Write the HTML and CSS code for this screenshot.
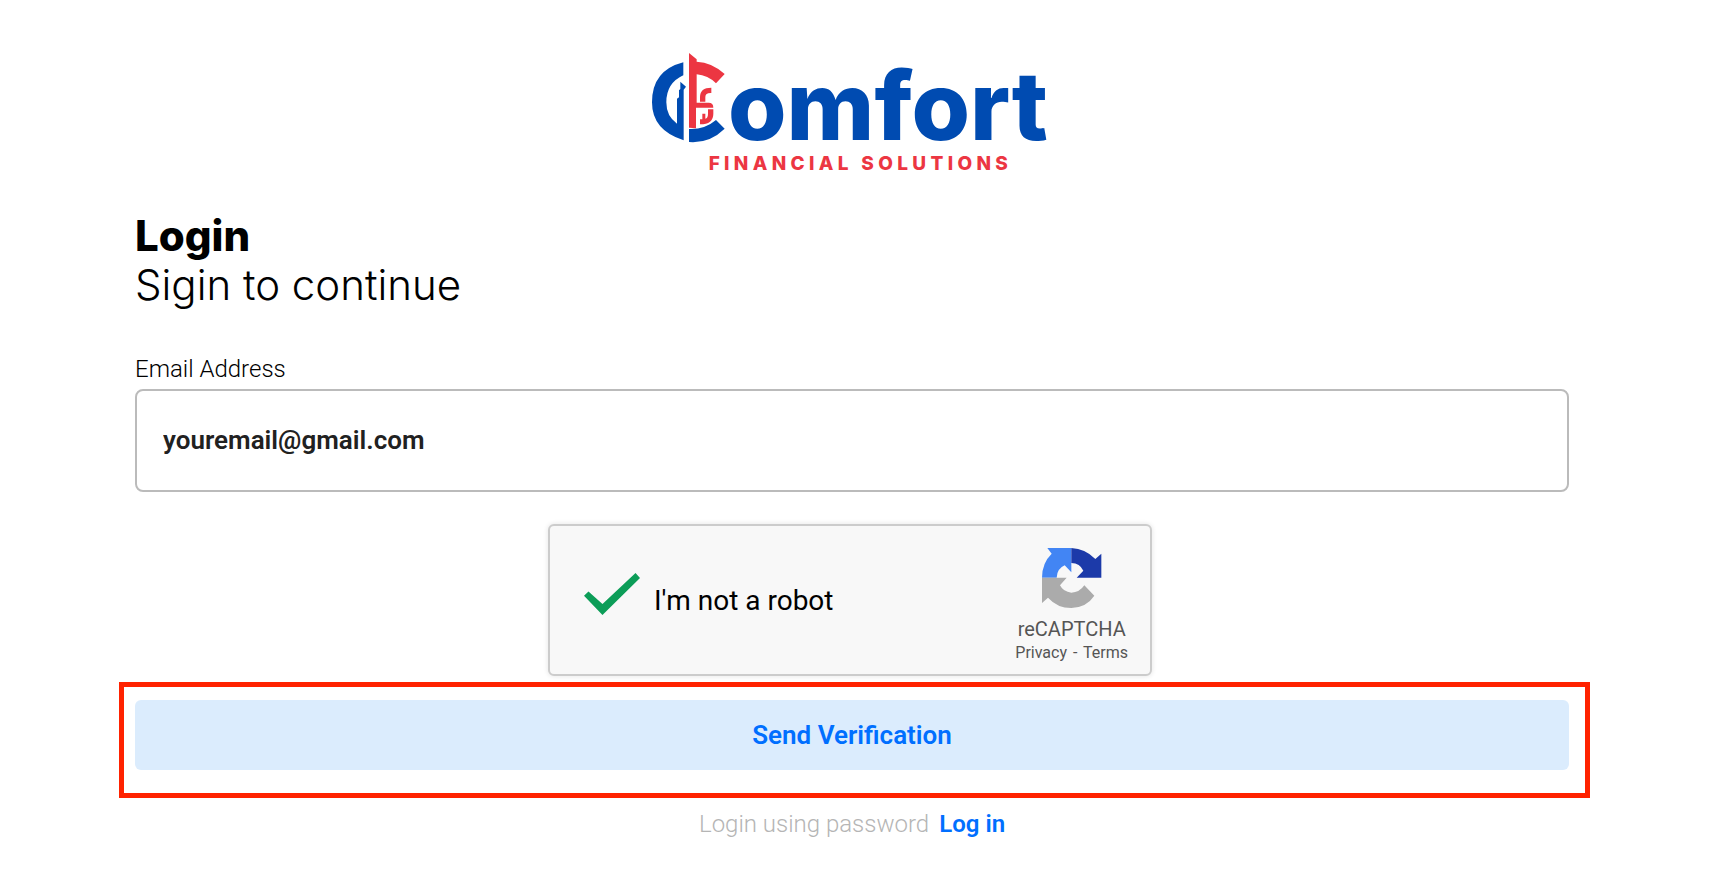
FILE: index.html
```html
<!DOCTYPE html>
<html lang="en">
<head>
<meta charset="utf-8">
<meta name="viewport" content="width=device-width, initial-scale=1">
<title>Login - Comfort Financial Solutions</title>
<link rel="stylesheet" href="styles.css">
</head>
<body>
<main class="page">
  <svg class="logo" viewBox="36 38 1200 360" role="img" aria-label="Comfort Financial Solutions">
    <g class="logo-blue">
      <path d="M130 66V105Q79 128 79 186Q79 228 111 250V175L117 171V150L121 146V124L138 139L131 148V300Q36 270 36 186Q36 90 130 66Z"/>
      <path d="M147 266Q194 268 228 239L254 265Q208 310 147 305Z"/>
      <text class="logo-word" x="264" y="300">omfort</text>
    </g>
    <g class="logo-red">
      <path d="M147 38L170 57V64Q216 66 254 101L228 129Q204 105 170 102V187H206Q220 187 220 202H168V264L147 262Z"/>
      <path d="M180 184V170Q180 142 214 142V158Q196 157 196 170V184Z"/>
      <path d="M180 220H196V235Q204 233 204 220V207H220V220Q220 252 180 252V237H187V220Z"/>
      <text class="logo-tag" x="206" y="388">FINANCIAL SOLUTIONS</text>
    </g>
  </svg>

  <header class="heading">
    <h1 class="title">Login</h1>
    <p class="subtitle">Sigin to continue</p>
  </header>

  <form class="form">
    <label class="field-label" for="email">Email Address</label>
    <input class="field" id="email" type="email" value="youremail@gmail.com">

    <div class="captcha">
      <label class="captcha-label">
        <input class="captcha-check" type="checkbox" checked>
        <span>I'm not a robot</span>
      </label>
      <div class="captcha-brand">
        <svg class="captcha-logo" viewBox="188 100 180 180" aria-hidden="true">
          <path fill="#4285f4" d="M204 100H276V173L256 152Q233 162 232 189H188Q188 145 217 117Z"/>
          <path fill="#1c3aa9" d="M276 100Q318 102 348 133L366 117V189H292L312 168Q302 146 276 145Z"/>
          <path fill="#ababab" d="M188 189H262L242 212Q252 232 276 234Q300 234 315 212L345 243Q322 278 276 280Q234 280 206 249L188 265Z"/>
        </svg>
        <span class="captcha-name">reCAPTCHA</span>
        <span class="captcha-links"><a href="#privacy">Privacy</a> - <a href="#terms">Terms</a></span>
      </div>
    </div>

    <div class="submit">
      <button class="submit-button" type="button">Send Verification</button>
    </div>
  </form>

  <p class="alternate">Login using password <a class="alternate-link" href="#login">Log in</a></p>
</main>
</body>
</html>
```
FILE: styles.css
```css
* {
  box-sizing: border-box;
}

body {
  margin: 0;
  background: #fff;
  color: #000;
  font-family: Roboto, "Liberation Sans", sans-serif;
}

.page {
  display: flex;
  flex-direction: column;
  padding: 53px 149px 48px 135px;
}

.logo {
  width: 400px;
  height: 120px;
  align-self: center;
  overflow: visible;
}

.logo-blue {
  fill: #004bb1;
}

.logo-red {
  fill: #ec3642;
}

.logo-word {
  font: 800 284px Inter, sans-serif;
}

.logo-tag {
  font: 800 57px Inter, sans-serif;
  letter-spacing: 13px;
}

.heading {
  margin-top: 38px;
  font-family: Inter, sans-serif;
}

.title,
.subtitle {
  margin: 0;
  font-size: 42px;
  line-height: 49px;
}

.title {
  font-weight: 800;
}

.subtitle {
  font-weight: 300;
}

.form {
  display: flex;
  flex-direction: column;
  margin-top: 44px;
}

.field-label {
  font-size: 24px;
  font-weight: 300;
  line-height: 32px;
  margin-bottom: 4px;
}

.field {
  width: 100%;
  height: 103px;
  padding: 0 26px 2px;
  border: 2px solid #bbb;
  border-radius: 8px;
  background: #fff;
  color: #212121;
  font: 600 26px Roboto, sans-serif;
}

.captcha {
  display: flex;
  align-items: center;
  justify-content: space-between;
  align-self: center;
  width: 604px;
  max-width: 100%;
  height: 152px;
  margin: 32px 4px 24px 0;
  padding: 0 22px 0 34px;
  border: 2px solid #ccc;
  border-radius: 6px;
  background: #f8f8f8;
  box-shadow: 0 0 4px 1px rgba(0, 0, 0, 0.08);
}

.captcha-label {
  display: flex;
  align-items: center;
  gap: 14px;
  font-size: 28px;
}

.captcha-check {
  appearance: none;
  width: 56px;
  height: 42px;
  margin: 0 0 12px;
  background: #0c9d58;
  clip-path: polygon(0 54%, 8% 44%, 33% 74%, 92% 0, 100% 12%, 33% 100%);
}

.captcha-brand {
  display: flex;
  flex-direction: column;
  align-items: center;
  padding-top: 12px;
  color: #555;
}

.captcha-logo {
  width: 60px;
  height: 60px;
  margin-bottom: 8px;
}

.captcha-name {
  font-size: 20px;
  line-height: 26px;
}

.captcha-links {
  font-size: 16px;
  line-height: 22px;
  word-spacing: 2px;
}

.captcha-links a {
  color: inherit;
  text-decoration: none;
}

.submit {
  position: relative;
  display: flex;
}

.submit::after {
  content: "";
  position: absolute;
  inset: -18px -21px -28px -16px;
  border: 5px solid #ff2200;
  pointer-events: none;
}

.submit-button {
  flex: 1;
  height: 70px;
  border: 0;
  border-radius: 6px;
  background: #dbecfd;
  color: #006fff;
  font: 600 26px Roboto, sans-serif;
}

.alternate {
  display: flex;
  justify-content: center;
  gap: 10px;
  margin: 38px 0 0;
  color: #b5b5b5;
  font-size: 24px;
  font-weight: 300;
  line-height: 32px;
}

.alternate-link {
  color: #006fff;
  font-weight: 600;
  text-decoration: none;
}
```
